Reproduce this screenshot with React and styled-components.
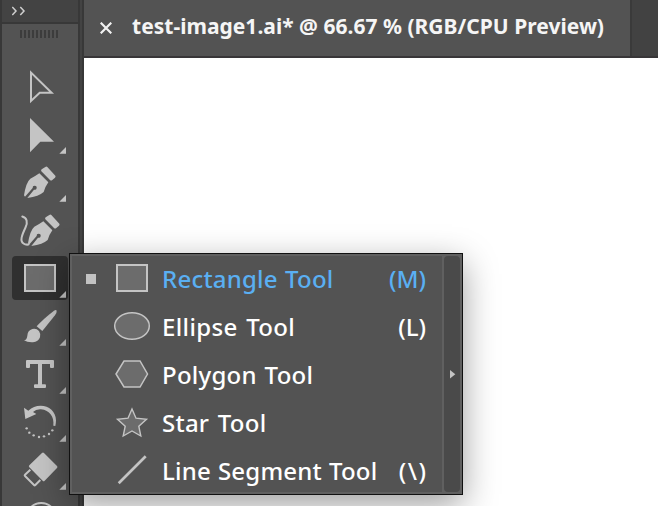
import React from "react";
import styled, { createGlobalStyle } from "styled-components";

const Global = createGlobalStyle`
  * { box-sizing: border-box; }
  body { margin: 0; overflow: hidden; background: #fff; font-family: "Noto Sans", "Open Sans", sans-serif; }
`;

const Window = styled.div`
  position: relative;
  display: flex;
  width: 658px;
  height: 506px;
  overflow: hidden;
  background: #fff;
`;

const Sidebar = styled.aside`
  width: 80px;
  flex: none;
  border: solid #383838;
  border-width: 0 2px;
  background: #535353;
`;

const SidebarHeader = styled.div`
  height: 24px;
  padding: 6px 0 0 10px;
  background: #434343;
  border-bottom: 2px solid #383838;
  svg { display: block; }
`;

const Grip = styled.div`
  width: 38px;
  height: 8px;
  margin: 6px 0 24px 18px;
  background: repeating-linear-gradient(90deg, #3c3c3c 0 2px, #535353 2px 4px);
`;

const ToolCell = styled.div`
  display: flex;
  align-items: center;
  width: 56px;
  height: 48px;
  margin-left: 10px;
`;

const ToolFace = styled.div`
  width: 56px;
  height: 44px;
  border-radius: 4px;
  background: ${(p) => (p.$active ? "#303030" : "transparent")};
  svg { display: block; margin-top: -2px; overflow: visible; }
`;

const Gutter = styled.div`
  width: 4px;
  flex: none;
  background: #434343;
  border-right: 2px solid #383838;
`;

const Main = styled.main`
  flex: 1;
  min-width: 0;
`;

const TabBar = styled.div`
  display: flex;
  height: 58px;
  background: #424242;
  border-bottom: 2px solid #383638;
`;

const Tab = styled.div`
  display: flex;
  align-items: center;
  width: 548px;
  padding: 0 0 3px 16px;
  background: #535353;
  border-right: 2px solid #3a3a3a;
  svg { flex: none; margin: 3px 20px 0 0; }
`;

const TabTitle = styled.span`
  color: #f5f5f5;
  font-size: 21px;
  font-weight: 700;
  letter-spacing: 0.02px;
  line-height: 29px;
  white-space: nowrap;
`;

const Flyout = styled.div`
  position: absolute;
  left: 69px;
  top: 253px;
  display: flex;
  width: 394px;
  height: 242px;
  padding: 2px;
  border: 1px solid #111;
  background: #606060;
  box-shadow: 0 10px 32px rgba(0, 0, 0, 0.38);
`;

const FlyoutList = styled.div`
  width: 370px;
  height: 236px;
  margin-top: 0;
  background: #535353;
`;

const FlyoutRow = styled.div`
  display: flex;
  align-items: center;
  height: 48px;
  padding-right: 16px;
  color: ${(p) => (p.$selected ? "#5aaff2" : "#fff")};
  font-size: 24px;
  font-weight: 500;
  &:first-child { margin-top: -2px; }
  svg { flex: none; display: block; }
`;

const Marker = styled.i`
  width: 10px;
  height: 10px;
  margin: 2px 18px 0 14px;
  background: ${(p) => (p.$selected ? "#c2c2c2" : "transparent")};
`;

const Name = styled.span`
  flex: 1;
  margin-left: 8px;
  letter-spacing: ${(p) => p.$tracking}px;
  word-spacing: ${(p) => p.$gap}px;
  white-space: nowrap;
`;

const Shortcut = styled.span`
  letter-spacing: ${(p) => p.$tracking || 0}px;
  margin-right: ${(p) => -(p.$tracking || 0)}px;
  white-space: nowrap;
`;

const TearOff = styled.div`
  display: flex;
  align-items: center;
  width: 16px;
  margin-left: 2px;
  padding-left: 6px;
  border-radius: 4px;
  background: #4a4a4a;
`;

const INK = "#c4c4c4";
const FILL = "#6c6c6c";

const Corner = () => <path d="M54 37V43.7H47.3Z" fill={INK} />;

const Nib = ({ dx = 0 }) => (
  <g transform={`translate(${dx - 12} -3) scale(.33333)`} fill={INK}>
    <path d="M136 36Q139 33 142 36L166 62Q168 65 165 68L156 76Q153 78 150 75L124 49Q122 46 125 43Z" />
    <path d="M72 121Q78 82 91 71Q104 65 118 55L145 82Q135 96 131 111Q117 124 82 129L102 104A6 6 0 1 0 98 99L75 125Z" />
  </g>
);

const tools = [
  { id: "select", icon: <path d="M19 10.6V39L27.7 30.7H39.6Z" fill="none" stroke={INK} strokeWidth="2" /> },
  { id: "direct", corner: true, icon: <path d="M18 8V42.3L28.3 31.7H42Z" fill={INK} /> },
  { id: "pen", corner: true, icon: <Nib /> },
  {
    id: "curvature",
    icon: (
      <>
        <Nib dx={4} />
        <path d="M10.3 10.5C15 12 16 16 13.5 21.5C10 29 7.5 35 11.5 37.5Q13.5 39 16.5 38.5" fill="none" stroke={INK} strokeWidth="2" strokeLinecap="round" />
      </>
    ),
  },
  { id: "rect", corner: true, active: true, icon: <rect x="13" y="11" width="30" height="26" fill={FILL} stroke={INK} strokeWidth="2" /> },
  {
    id: "brush",
    corner: true,
    icon: (
      <g transform="translate(-12 -57) scale(.33333)" fill={INK}>
        <path d="M162 197Q168 193 170 197Q171 202 165 211L127 258L110 244Q127 224 162 197Z" />
        <path d="M72 286Q81 284 82 272Q83 256 97 252Q109 249 117 258Q123 267 120 277Q115 290 99 292Q82 293 72 286Z" />
      </g>
    ),
  },
  {
    id: "type",
    corner: true,
    icon: <path d="M15 10H41Q42 10 42 11V17Q42 18 41 18H39Q38 18 38 17V14H30V34.3H33Q34 34.3 34 35.3V37Q34 38 33 38H23Q22 38 22 37V35.3Q22 34.3 23 34.3H26V14H18V17Q18 18 17 18H15Q14 18 14 17V11Q14 10 15 10Z" fill={INK} />,
  },
  {
    id: "rotate",
    corner: true,
    icon: (
      <g transform="translate(-12 -63) scale(.33333)" fill={INK}>
        <path d="M72 218L85 227Q101 212 122 212C147 212 168 230 168 256Q168 265 166 273L160 272C163 245 149 226 123 223Q108 222 99 231L109 237L76 252Z" />
        {[[80, 280], [88, 293], [101, 301], [117, 306], [132, 304], [147, 297], [157, 286]].map(([x, y]) => (
          <circle key={x} cx={x} cy={y} r="3.6" />
        ))}
      </g>
    ),
  },
  {
    id: "eraser",
    corner: true,
    icon: (
      <g transform="translate(-12 -21) scale(.33333)" fill={INK}>
        <path d="M126 84Q129 81 132 84L171 123Q174 126 171 129L134 167Q131 170 128 167L88 127Q85 124 88 121Z" />
        <path d="M91 134L75 149Q73 151 75 153L102 180Q104 182 106 180L121 165" fill="none" stroke={INK} strokeWidth="6" />
      </g>
    ),
  },
  { id: "builder", icon: <circle cx="29.2" cy="24" r="15" fill="none" stroke={INK} strokeWidth="1.8" /> },
];

const items = [
  { name: "Rectangle Tool", shortcut: "(M)", selected: true, tracking: 0.22, gap: 0.8, icon: <rect x="3" y="11" width="30" height="26" strokeWidth="2" /> },
  { name: "Ellipse Tool", shortcut: "(L)", tracking: 0.35, gap: 2, icon: <ellipse cx="18" cy="24" rx="17.3" ry="13.2" strokeWidth="1.5" /> },
  { name: "Polygon Tool", tracking: 0.25, gap: 1.3, icon: <path d="M10 11H26L33.5 24L26 37H10L2 24Z" strokeWidth="1.5" /> },
  { name: "Star Tool", tracking: 0.25, gap: 2, icon: <path d="M18 11L22 20.2L32.5 21.3L24.8 28.2L26.8 38L18 33L9.2 38L11.2 28.2L3.5 21.3L14 20.2Z" strokeWidth="1.4" /> },
  { name: "Line Segment Tool", shortcut: "(\\)", keyTracking: 1.5, tracking: 0.2, gap: 0.6, icon: <path d="M4.7 37.3L31.7 10.3" strokeWidth="2.7" /> },
];

export default function App() {
  return (
    <Window>
      <Global />
      <Sidebar>
        <SidebarHeader>
          <svg width="16" height="11" fill="none" stroke="#cfcfcf" strokeWidth="1.5">
            <path d="M.3 1L4 5L.3 9M8.3 1L12 5L8.3 9" />
          </svg>
        </SidebarHeader>
        <Grip />
        {tools.map((t) => (
          <ToolCell key={t.id}>
            <ToolFace $active={t.active}>
              <svg width="56" height="48">
                {t.icon}
                {t.corner && <Corner />}
              </svg>
            </ToolFace>
          </ToolCell>
        ))}
      </Sidebar>
      <Gutter />
      <Main>
        <TabBar>
          <Tab>
            <svg width="12" height="12" stroke="#f2f2f2" strokeWidth="2.2">
              <path d="M.7 .7L11.3 11.3M11.3 .7L.7 11.3" />
            </svg>
            <TabTitle>test-image1.ai* @ 66.67 % (RGB/CPU Preview)</TabTitle>
          </Tab>
        </TabBar>
      </Main>
      <Flyout>
        <FlyoutList>
          {items.map((it) => (
            <FlyoutRow key={it.name} $selected={it.selected}>
              <Marker $selected={it.selected} />
              <svg width="40" height="48" fill={FILL} stroke={INK}>{it.icon}</svg>
              <Name $tracking={it.tracking} $gap={it.gap}>{it.name}</Name>
              {it.shortcut && <Shortcut $tracking={it.keyTracking}>{it.shortcut}</Shortcut>}
            </FlyoutRow>
          ))}
        </FlyoutList>
        <TearOff>
          <svg width="6" height="9"><path d="M0 0L5.3 4.3L0 8.6Z" fill={INK} /></svg>
        </TearOff>
      </Flyout>
    </Window>
  );
}
